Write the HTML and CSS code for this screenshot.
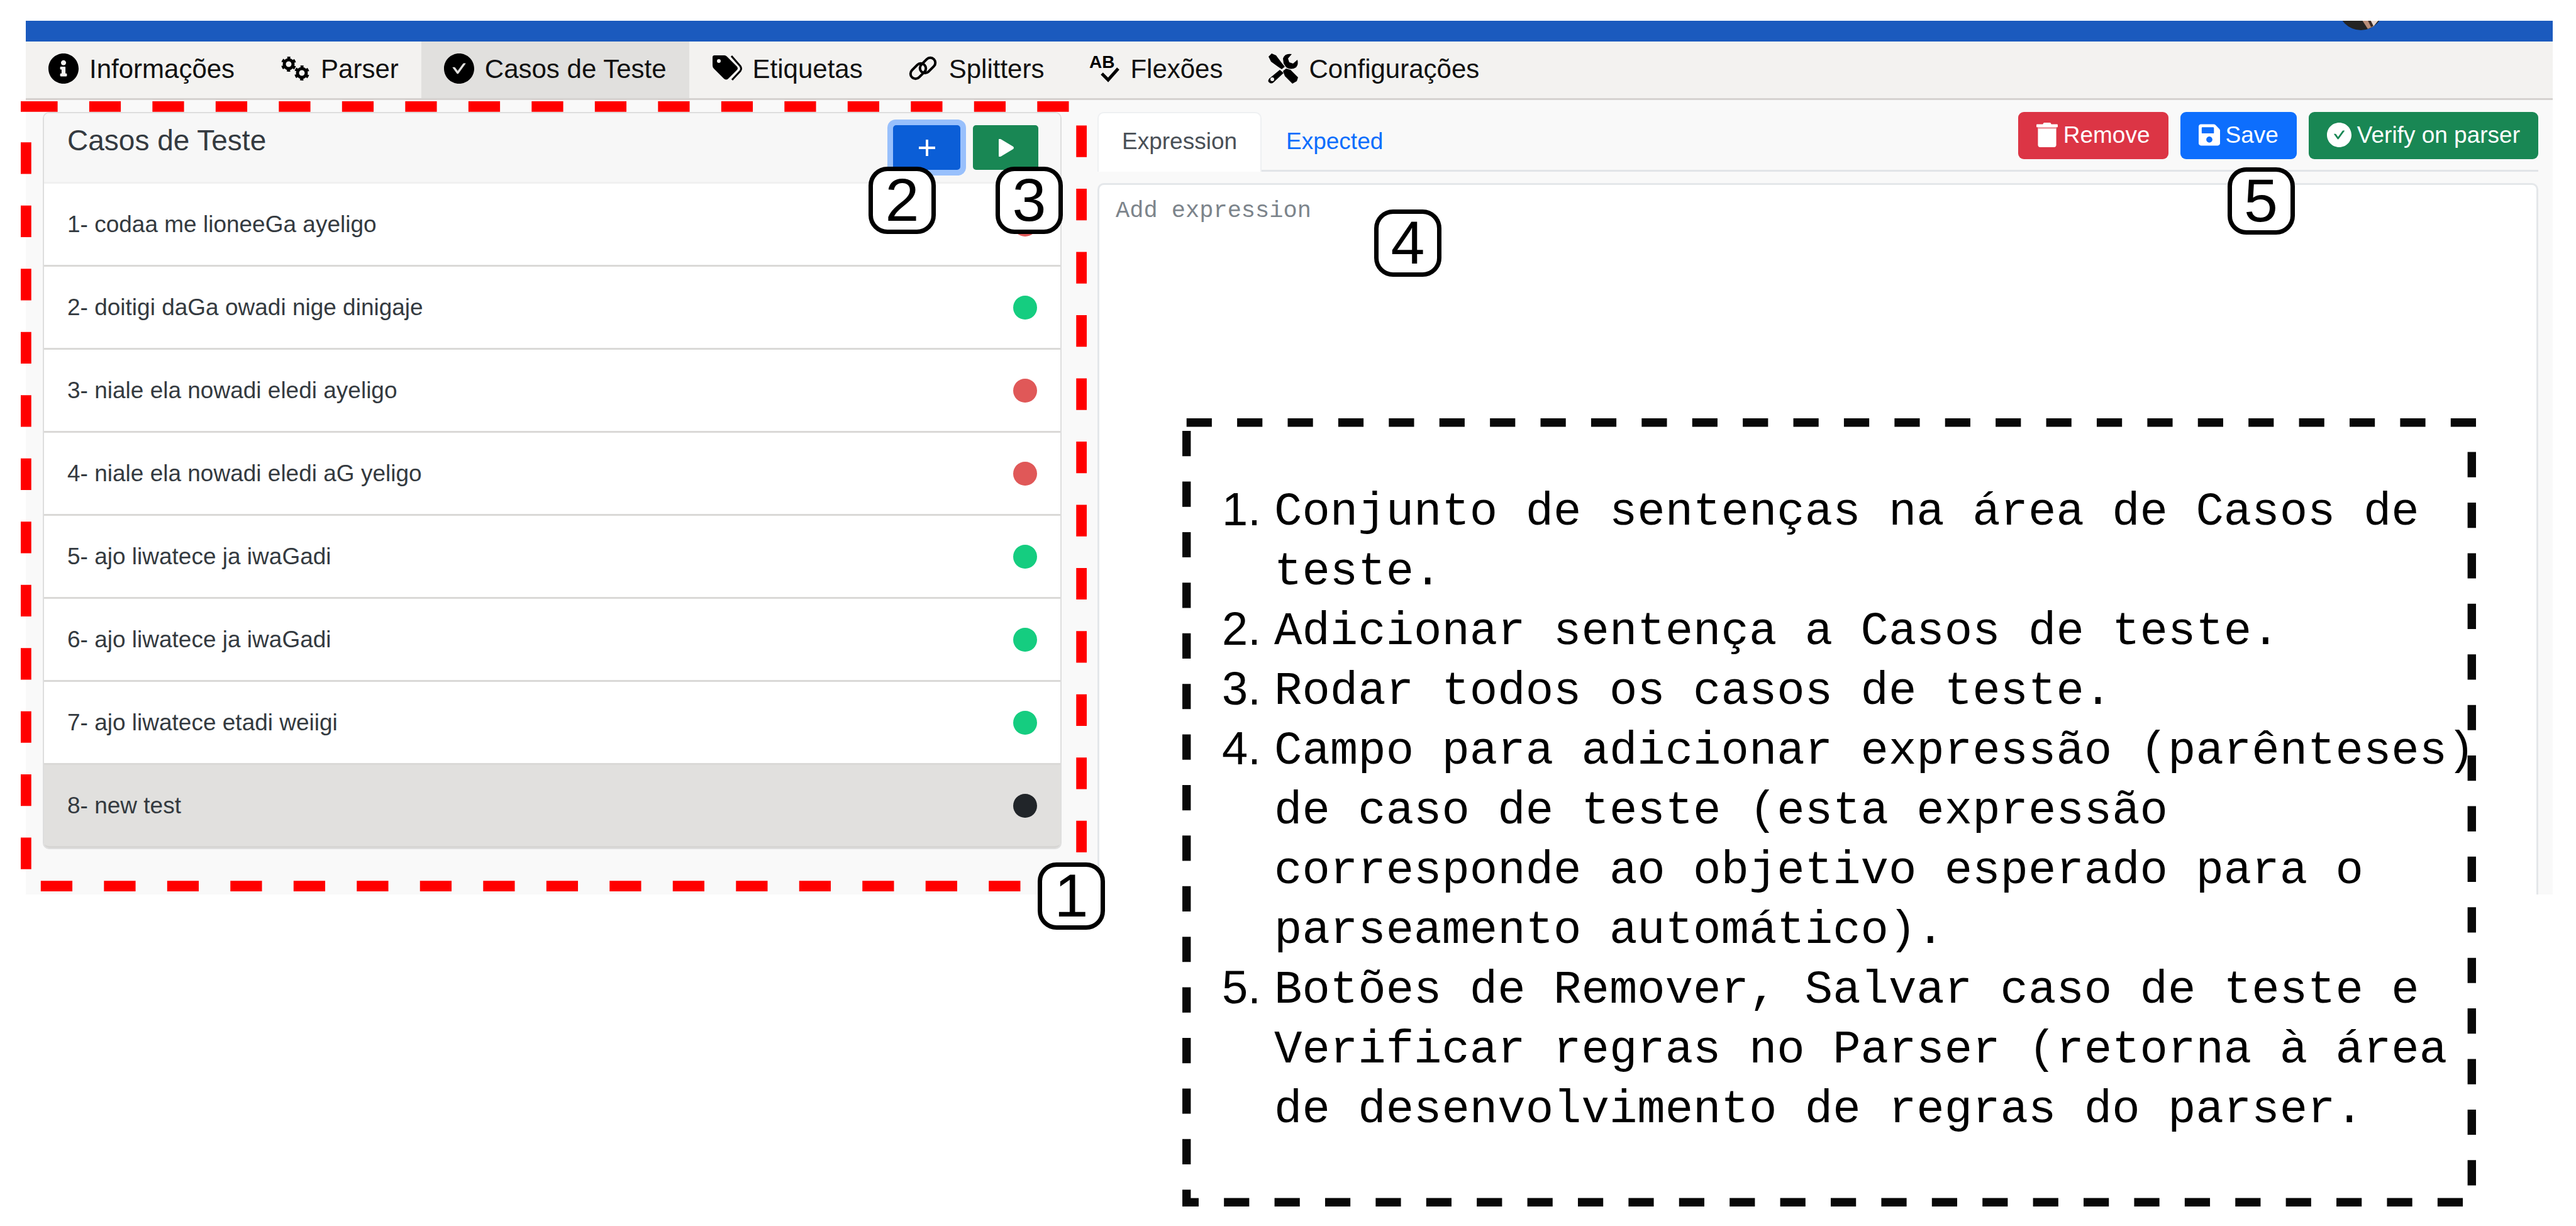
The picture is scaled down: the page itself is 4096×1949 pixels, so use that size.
FILE: index.html
```html
<!DOCTYPE html>
<html lang="pt-BR">
<head>
<meta charset="utf-8">
<title>Casos de Teste</title>
<link rel="stylesheet" href="styles.css">
</head>
<body>
<div class="app">
  <header class="topbar">
    <svg class="avatar" viewBox="0 0 72 72" aria-hidden="true">
      <circle cx="36" cy="36" r="36" fill="#242424"/>
      <path d="M34 50L47 70L56 66L42 50Z" fill="#b98d78"/>
      <path d="M44 50L56 66L69 50Z" fill="#e6d5ce"/>
      <path d="M46 50L54 66" stroke="#3a2a26" stroke-width="4"/>
    </svg>
  </header>

  <nav class="menu">
    <a class="menu-item" href="#informacoes">
      <svg class="icon" viewBox="8 8 496 496" aria-hidden="true"><path d="M256 8C119.043 8 8 119.083 8 256c0 136.997 111.043 248 248 248s248-111.003 248-248C504 119.083 392.957 8 256 8zm0 110c23.196 0 42 18.804 42 42s-18.804 42-42 42-42-18.804-42-42 18.804-42 42-42zm56 254c0 6.627-5.373 12-12 12h-88c-6.627 0-12-5.373-12-12v-24c0-6.627 5.373-12 12-12h12v-64h-12c-6.627 0-12-5.373-12-12v-24c0-6.627 5.373-12 12-12h64c6.627 0 12 5.373 12 12v100h12c6.627 0 12 5.373 12 12v24z"/></svg>
      Informações
    </a>
    <a class="menu-item" href="#parser">
      <svg class="icon" viewBox="0 0 48 48" aria-hidden="true" fill="none" stroke="#000">
        <g transform="translate(14 17) rotate(-90)"><circle r="7" stroke-width="5"/><circle r="10" stroke-width="4" stroke-dasharray="5 5.470" stroke-dashoffset="2.500"/></g>
        <g transform="translate(35 31) rotate(-90)"><circle r="7" stroke-width="5"/><circle r="10" stroke-width="4" stroke-dasharray="5 5.470" stroke-dashoffset="2.500"/></g>
      </svg>
      Parser
    </a>
    <a class="menu-item active" href="#casos" aria-current="page">
      <svg class="icon" viewBox="64 64 896 896" aria-hidden="true"><path d="M512 64C264.6 64 64 264.6 64 512s200.6 448 448 448 448-200.6 448-448S759.400 64 512 64zm193.500 301.700l-210.600 292a31.800 31.800 0 0 1-51.700 0L318.500 484.900c-3.800-5.300 0-12.700 6.500-12.700h46.900c10.200 0 19.900 4.900 25.900 13.300l71.200 98.800 157.200-218c6-8.300 15.600-13.300 25.900-13.300H699c6.500 0 10.300 7.400 6.500 12.700z"/></svg>
      Casos de Teste
    </a>
    <a class="menu-item" href="#etiquetas">
      <svg class="icon" viewBox="0 0 48 48" aria-hidden="true">
        <path fill-rule="evenodd" d="M4 3H20Q22 3 24 5L40 21Q42 24 40 26L26 40Q23 43 19 40L3 24Q1 22 1 19V6Q1 3 4 3ZM11 9a3 3 0 1 0 0 6a3 3 0 1 0 0-6Z"/>
        <path d="M31 4L45 20Q48 24 45 28L32 42" fill="none" stroke="#000" stroke-width="3"/>
      </svg>
      Etiquetas
    </a>
    <a class="menu-item" href="#splitters">
      <svg class="icon" viewBox="0 0 48 48" aria-hidden="true" fill="none" stroke="#000" stroke-width="4">
        <rect x="-14" y="-8" width="28" height="16" rx="8" transform="translate(16 28) rotate(-45)"/>
        <rect x="-14" y="-8" width="28" height="16" rx="8" transform="translate(31 19) rotate(-45)"/>
      </svg>
      Splitters
    </a>
    <a class="menu-item" href="#flexoes">
      <svg class="icon" viewBox="0 0 48 48" aria-hidden="true">
        <text class="icon-text" x="0" y="23">AB</text>
        <path d="M20 32L30 42L46 24" fill="none" stroke="#000" stroke-width="5"/>
      </svg>
      Flexões
    </a>
    <a class="menu-item" href="#configuracoes">
      <svg class="icon" viewBox="0 0 48 48" aria-hidden="true">
        <path d="M1 5L6 0L13 3L22 15L27 21L22 25L16 21L5 13Z"/>
        <path fill-rule="evenodd" d="M19 26L2 40Q-1 44 2 46Q5 49 9 46L25 31ZM7 38a3 3 0 1 1 0 6a3 3 0 1 1 0-6Z"/>
        <path d="M38 1Q27-1 24 8L25 16L29 22Q37 27 45 22Q49 17 47 10L40 16L34 14L32 8Z"/>
        <path d="M24 28L29 24L36 26L48 38L46 44L39 48L27 36Z"/>
      </svg>
      Configurações
    </a>
  </nav>

  <main class="content">
    <section class="cases">
      <div class="card">
        <div class="card-header">
          <h1 class="card-title">Casos de Teste</h1>
          <div class="card-actions">
            <div class="anchor">
              <button class="square-btn add" type="button" aria-label="Adicionar">
                <svg class="glyph" viewBox="0 0 28 28" aria-hidden="true"><path d="M14 1V27M1 14H27" stroke="#fff" stroke-width="4"/></svg>
              </button>
              <span class="callout callout-2">2</span>
            </div>
            <div class="anchor">
              <button class="square-btn run" type="button" aria-label="Rodar todos">
                <svg class="glyph" viewBox="0 0 28 28" aria-hidden="true"><path d="M3 1Q3-1 6 0L26 12Q28 14 26 16L6 28Q3 29 3 27Z" fill="#fff"/></svg>
              </button>
              <span class="callout callout-3">3</span>
            </div>
          </div>
        </div>
        <ul class="case-list">
          <li class="case">1- codaa me lioneeGa ayeligo<span class="dot fail"></span></li>
          <li class="case">2- doitigi daGa owadi nige dinigaje<span class="dot pass"></span></li>
          <li class="case">3- niale ela nowadi eledi ayeligo<span class="dot fail"></span></li>
          <li class="case">4- niale ela nowadi eledi aG yeligo<span class="dot fail"></span></li>
          <li class="case">5- ajo liwatece ja iwaGadi<span class="dot pass"></span></li>
          <li class="case">6- ajo liwatece ja iwaGadi<span class="dot pass"></span></li>
          <li class="case">7- ajo liwatece etadi weiigi<span class="dot pass"></span></li>
          <li class="case selected">8- new test<span class="dot"></span></li>
        </ul>
        <svg class="region" viewBox="0 0 2024 1500" preserveAspectRatio="none" aria-hidden="true" fill="none" stroke="#f00" stroke-width="20">
          <path d="M0 10H70"/>
          <path d="M130 10H1990" stroke-dasharray="60 60"/>
          <path d="M10 78V1460" stroke-dasharray="60 60"/>
          <path d="M2014 46V1430" stroke-dasharray="60 60"/>
          <path d="M38 1490H1900" stroke-dasharray="60 60"/>
        </svg>
        <span class="callout callout-1">1</span>
      </div>
    </section>

    <section class="editor">
      <div class="toolbar">
        <div class="tabs">
          <a class="tab active" href="#expression">Expression</a>
          <a class="tab" href="#expected">Expected</a>
        </div>
        <div class="actions">
          <button class="btn danger" type="button">
            <svg class="btn-icon narrow" viewBox="0 0 448 512" aria-hidden="true"><path d="M32 464a48 48 0 0 0 48 48h288a48 48 0 0 0 48-48V128H32z"/><path opacity=".55" d="M28 96H420V128H28z"/><path d="M432 32H312l-9.400-18.700A24 24 0 0 0 281.100 0H166.800a23.720 23.720 0 0 0-21.400 13.300L136 32H16A16 16 0 0 0 0 48v32a16 16 0 0 0 16 16h416a16 16 0 0 0 16-16V48a16 16 0 0 0-16-16z"/></svg>
            Remove
          </button>
          <div class="anchor">
            <button class="btn primary" type="button">
              <svg class="btn-icon narrow" viewBox="0 0 448 512" aria-hidden="true"><path d="M433.941 129.941l-83.882-83.882A48 48 0 0 0 316.118 32H48C21.490 32 0 53.490 0 80v352c0 26.510 21.490 48 48 48h352c26.510 0 48-21.490 48-48V163.882a48 48 0 0 0-14.059-33.941zM224 416c-35.346 0-64-28.654-64-64 0-35.346 28.654-64 64-64s64 28.654 64 64c0 35.346-28.654 64-64 64zm96-304.520V212c0 6.627-5.373 12-12 12H76c-6.627 0-12-5.373-12-12V108c0-6.627 5.373-12 12-12h228.520c3.183 0 6.235 1.264 8.485 3.515l3.480 3.480A11.996 11.996 0 0 1 320 111.480z"/></svg>
              Save
            </button>
            <span class="callout callout-5">5</span>
          </div>
          <button class="btn success" type="button">
            <svg class="btn-icon" viewBox="64 64 896 896" aria-hidden="true"><path d="M512 64C264.600 64 64 264.600 64 512s200.600 448 448 448 448-200.600 448-448S759.400 64 512 64zm193.500 301.700l-210.600 292a31.800 31.800 0 0 1-51.700 0L318.500 484.900c-3.800-5.300 0-12.700 6.500-12.700h46.900c10.200 0 19.900 4.900 25.900 13.300l71.200 98.800 157.200-218c6-8.300 15.600-13.300 25.900-13.300H699c6.500 0 10.300 7.400 6.500 12.700z"/></svg>
            Verify on parser
          </button>
        </div>
      </div>
      <div class="field">
        <textarea class="expression" aria-label="Expression" placeholder="Add expression"></textarea>
        <span class="callout callout-4">4</span>

        <aside class="legend">
          <svg class="legend-frame" viewBox="0 0 2456 1496" preserveAspectRatio="none" aria-hidden="true" fill="none" stroke="#080808" stroke-width="16">
            <path d="M8 8H2456" stroke-dasharray="48 48"/>
            <path d="M8 24V1496" stroke-dasharray="48 48"/>
            <path d="M2448 64V1456" stroke-dasharray="48 48"/>
            <path d="M0 1488H31"/>
            <path d="M79 1488H2432" stroke-dasharray="48 48"/>
          </svg>
          <ol class="legend-list">
            <li><span class="num">1.</span><span>Conjunto de sentenças na área de Casos de teste.</span></li>
            <li><span class="num">2.</span><span>Adicionar sentença a Casos de teste.</span></li>
            <li><span class="num">3.</span><span>Rodar todos os casos de teste.</span></li>
            <li><span class="num">4.</span><span>Campo para adicionar expressão (parênteses) de caso de teste (esta expressão corresponde ao objetivo esperado para o parseamento automático).</span></li>
            <li><span class="num">5.</span><span>Botões de Remover, Salvar caso de teste e Verificar regras no Parser (retorna à área de desenvolvimento de regras do parser.</span></li>
          </ol>
        </aside>
      </div>
    </section>
  </main>
</div>
</body>
</html>
```

FILE: styles.css
```css
* {
  box-sizing: border-box;
}

body {
  margin: 0;
  padding: 33px 37px 0 41px;
  min-height: 100vh;
  background: #fff;
  color: #212529;
  font: 37px/55px "Liberation Sans", Arial, sans-serif;
}

.app {
  background: #f9f9f9;
}

/* Top bar */
.topbar {
  position: relative;
  height: 33px;
  overflow: hidden;
  background: #1b5abe;
}

.avatar {
  position: absolute;
  top: -57px;
  right: 269px;
  width: 72px;
  height: 72px;
}

/* Main menu */
.menu {
  display: flex;
  height: 93px;
  background: #f3f2f0;
  border-bottom: 3px solid #d5d2d0;
}

.menu-item {
  display: flex;
  align-items: center;
  gap: 17px;
  padding: 0 36px 4px;
  color: #111;
  font-size: 42px;
  white-space: nowrap;
  text-decoration: none;
}

.menu-item.active {
  background: #e1e0de;
}

.icon {
  flex: none;
  width: 48px;
  height: 48px;
  overflow: visible;
}

.icon-text {
  font: bold 28px "Liberation Sans", Arial, sans-serif;
}

/* Two-column content */
.content {
  display: grid;
  grid-template-columns: 1620fr 2291fr;
  gap: 57px;
  padding: 19px 23px 0 27px;
}

.cases {
  padding-bottom: 72px;
}

.card {
  position: relative;
  background: #fff;
  border: 2px solid #dedede;
  border-radius: 10px;
}

.card-header {
  display: flex;
  justify-content: space-between;
  align-items: flex-start;
  padding: 19px 35px 19px 37px;
  background: #f7f7f7;
  border-bottom: 3px solid #f0f0f0;
  border-radius: 8px 8px 0 0;
}

.card-title {
  margin: 0;
  color: #343a40;
  font-size: 46px;
  font-weight: 400;
  line-height: 48px;
}

.card-actions {
  display: flex;
  gap: 20px;
}

.anchor {
  position: relative;
}

.square-btn {
  display: flex;
  align-items: center;
  justify-content: center;
  width: 104px;
  height: 71px;
  padding: 0;
  border: 0;
  border-radius: 5px;
}

.square-btn.add {
  width: 107px;
  background: #0b5ed7;
  box-shadow: 0 0 0 9px #98c0fc;
}

.square-btn.run {
  background: #198754;
}

.glyph {
  width: 28px;
  height: 28px;
}

.case-list {
  margin: 0;
  padding: 0;
  list-style: none;
}

.case {
  display: flex;
  align-items: center;
  justify-content: space-between;
  height: 132px;
  padding: 0 37px;
  color: #343a40;
  border-bottom: 3px solid #dad9d7;
}

.case.selected {
  background: #e1e0de;
  border-bottom-color: #d6d5d3;
  border-radius: 0 0 8px 8px;
}

.dot {
  width: 38px;
  height: 38px;
  border-radius: 50%;
  background: #212529;
}

.dot.pass {
  background: #15cd80;
}

.dot.fail {
  background: #e05858;
}

/* Editor */
.editor {
  display: flex;
  flex-direction: column;
  gap: 18px;
}

.toolbar {
  display: flex;
  justify-content: space-between;
  align-items: flex-start;
  height: 95px;
  border-bottom: 3px solid #e1e4e8;
}

.tabs {
  display: flex;
}

.tab {
  height: 95px;
  padding: 17px 37px 0;
  color: #0d6efd;
  border: 2px solid transparent;
  border-bottom: 0;
  text-decoration: none;
}

.tab.active {
  color: #495057;
  background: #fff;
  border-color: #eef0f2;
  border-radius: 10px 10px 0 0;
}

.actions {
  display: flex;
  gap: 19px;
}

.btn {
  display: flex;
  align-items: center;
  gap: 9px;
  height: 75px;
  padding: 0 29px 3px;
  border: 0;
  border-radius: 9px;
  color: #fff;
  font: inherit;
  white-space: nowrap;
}

.btn.danger {
  background: #dc3545;
}

.btn.primary {
  background: #0d6efd;
}

.btn.success {
  background: #198754;
}

.btn-icon {
  width: 39px;
  height: 39px;
  fill: #fff;
}

.btn-icon.narrow {
  width: 34px;
}

.field {
  position: relative;
  display: flex;
  flex: 1;
}

.expression {
  width: 100%;
  padding: 14px 26px;
  background: #fff;
  border: 3px solid #e4e7ea;
  border-bottom: 0;
  border-radius: 10px 10px 0 0;
  font: 37px/55px "Liberation Mono", "Courier New", monospace;
  resize: none;
}

.expression::placeholder {
  color: #7c848b;
}

/* Numbered callouts laid over the controls they explain */
.callout {
  position: absolute;
  z-index: 2;
  display: flex;
  align-items: center;
  justify-content: center;
  width: 107px;
  height: 107px;
  padding-bottom: 2px;
  background: #fff;
  border: 7px solid #000;
  border-radius: 30px;
  color: #000;
  font-size: 97px;
  line-height: 1;
}

.callout-1 {
  right: -71px;
  bottom: -130px;
}

.callout-2 {
  left: -39px;
  top: 66px;
}

.callout-3 {
  left: 36px;
  top: 66px;
}

.callout-4 {
  left: 440px;
  top: 42px;
}

.callout-5 {
  left: 75px;
  top: 88px;
}

.region {
  position: absolute;
  left: -37px;
  top: -19px;
  width: calc(100% + 79px);
  height: calc(100% + 88px);
  pointer-events: none;
}

/* Legend */
.legend {
  position: absolute;
  right: 99px;
  top: 374px;
  width: 2057px;
  height: 1253px;
  padding: 102px 0 0 63px;
}

.legend-frame {
  position: absolute;
  inset: 0;
  width: 100%;
  height: 100%;
}

.legend-list {
  margin: 0;
  padding: 0;
  list-style: none;
  color: #000;
  font: 74px/95px "Liberation Mono", "Courier New", monospace;
}

.legend-list li {
  display: grid;
  grid-template-columns: 83px 1fr;
}

.num {
  font-family: "Liberation Sans", Arial, sans-serif;
  line-height: 85px;
}
```
